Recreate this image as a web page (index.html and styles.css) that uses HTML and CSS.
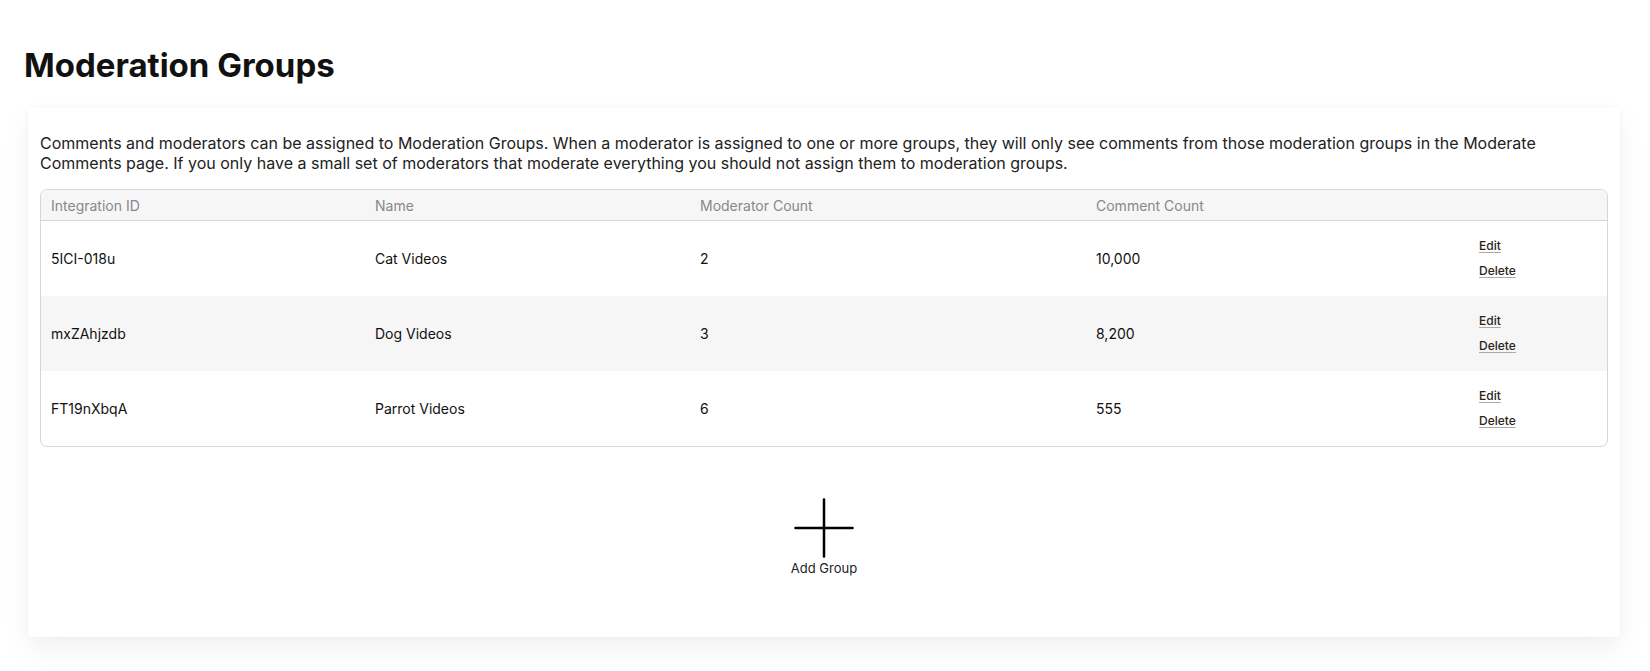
FILE: index.html
```html
<!DOCTYPE html>
<html lang="en">
<head>
  <meta charset="UTF-8" />
  <meta name="viewport" content="width=device-width, initial-scale=1.0"/>
  <title>Moderation Groups</title>
  <link rel="stylesheet" href="styles.css">
</head>
<body>
  <div class="page">
    <h1>Moderation Groups</h1>

    <div class="card">
      <p class="intro">Comments and moderators can be assigned to Moderation Groups. When a moderator is assigned to one or more groups, they will only see comments from those moderation groups in the Moderate Comments page. If you only have a small set of moderators that moderate everything you should not assign them to moderation groups.</p>

      <div class="table-wrap">
        <table class="groups">
          <thead>
            <tr>
              <th class="col-id">Integration ID</th>
              <th class="col-name">Name</th>
              <th class="col-mods">Moderator Count</th>
              <th class="col-comments">Comment Count</th>
              <th class="col-actions"></th>
            </tr>
          </thead>
          <tbody>
            <tr>
              <td>5ICI-018u</td>
              <td>Cat Videos</td>
              <td>2</td>
              <td>10,000</td>
              <td class="actions"><a href="#">Edit</a><a href="#">Delete</a></td>
            </tr>
            <tr>
              <td>mxZAhjzdb</td>
              <td>Dog Videos</td>
              <td>3</td>
              <td>8,200</td>
              <td class="actions"><a href="#">Edit</a><a href="#">Delete</a></td>
            </tr>
            <tr>
              <td>FT19nXbqA</td>
              <td>Parrot Videos</td>
              <td>6</td>
              <td>555</td>
              <td class="actions"><a href="#">Edit</a><a href="#">Delete</a></td>
            </tr>
          </tbody>
        </table>
      </div>

      <!-- Add group -->
      <button class="add-group">
        <svg width="60" height="60" viewBox="0 0 60 60">
          <path d="M30 1.5 V58.5 M1.5 30 H58.5" stroke="#000" stroke-width="2.5" stroke-linecap="round" fill="none"/>
        </svg>
        <span>Add Group</span>
      </button>
    </div>
  </div>
</body>
</html>
```

FILE: styles.css
```css
body, html {
  margin: 0;
  padding: 0;
  font-family: Inter, "Noto Sans", sans-serif;
  background-color: #fff;
  color: #222;
}

.page {
  padding: 45px 30px 34px 24px;
}

h1 {
  margin: 0 0 22px 0;
  font-size: 33px;
  line-height: 41px;
  font-weight: 700;
  color: #111;
}

.card {
  margin-left: 4px;
  padding: 25px 12px 61px 12px;
  background-color: #fff;
  border-radius: 4px;
  box-shadow: 0 12px 30px rgba(0, 0, 0, 0.06), 0 0 6px rgba(0, 0, 0, 0.03);
}

.intro {
  margin: 0 0 16px 0;
  font-size: 16px;
  line-height: 20px;
  color: #222;
}

.table-wrap {
  border: 1px solid #d6d6d6;
  border-radius: 7px;
  overflow: hidden;
}

.groups {
  width: 100%;
  border-collapse: collapse;
  font-size: 14px;
}

.groups th {
  height: 30px;
  padding: 0 10px;
  text-align: left;
  font-weight: 400;
  color: #888;
  background-color: #f6f6f6;
  border-bottom: 1px solid #d6d6d6;
}

.col-id { width: 304px; }
.col-name { width: 305px; }
.col-mods { width: 376px; }
.col-comments { width: 363px; }

.groups td {
  height: 75px;
  padding: 0 10px;
  color: #111;
}

.groups tbody tr:nth-child(2) {
  background-color: #f6f6f6;
}

.actions a {
  display: block;
  font-size: 12px;
  line-height: 16px;
  font-weight: 500;
  color: #2a2418;
  text-decoration: underline;
  text-decoration-color: #aaa;
  text-underline-offset: 2px;
}

.actions a + a {
  margin-top: 9px;
}

.add-group {
  display: flex;
  flex-direction: column;
  align-items: center;
  margin: 51px auto 0 auto;
  padding: 0;
  background: none;
  border: none;
  font-family: inherit;
  font-size: 13px;
  color: #222;
  cursor: pointer;
}

.add-group span {
  margin-top: 2px;
  line-height: 16px;
}
```
